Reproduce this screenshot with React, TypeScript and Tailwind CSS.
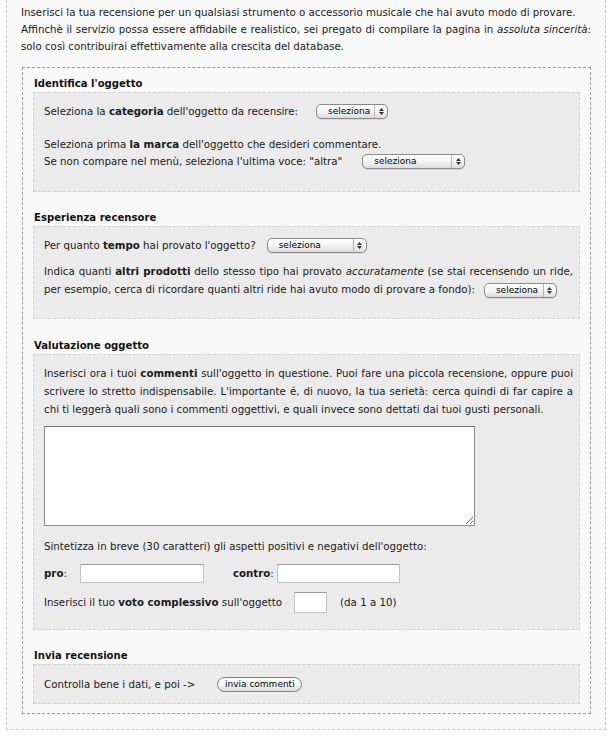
import React from 'react'

const font = { fontFamily: '"DejaVu Sans", Verdana, sans-serif' }

const Select: React.FC<{ width: string }> = ({ width }) => (
  <span
    className={`relative inline-flex h-[15px] ${width} items-center rounded-[5px] border border-[#8a8a8a] bg-gradient-to-b from-white via-[#f4f4f4] to-[#dcdcdc] align-middle shadow-[0_1px_0_rgba(0,0,0,0.08)]`}
  >
    <span className="pl-[11px] text-[9px] leading-none text-black">seleziona</span>
    <span className="absolute right-0 top-0 flex h-full w-[13px] flex-col items-center justify-center gap-[1px] border-l border-[#b5b5b5]">
      <svg width="5" height="3" viewBox="0 0 5 3">
        <path d="M2.5 0L5 3H0z" fill="#333" />
      </svg>
      <svg width="5" height="3" viewBox="0 0 5 3">
        <path d="M0 0h5L2.5 3z" fill="#333" />
      </svg>
    </span>
  </span>
)

const Heading: React.FC<{ children: React.ReactNode; className?: string }> = ({ children, className = '' }) => (
  <h3 className={`pl-[1px] text-[10.1px] font-bold leading-[17px] text-[#111] ${className}`}>{children}</h3>
)

const Box: React.FC<{ children: React.ReactNode; className?: string }> = ({ children, className = '' }) => (
  <div className={`border border-dashed border-[#d2d2d2] bg-[#ebebeb] pl-[10px] pr-[6px] ${className}`}>{children}</div>
)

// one justified line, stretched to the full width
const JLine: React.FC<{ children: React.ReactNode }> = ({ children }) => (
  <span className="block whitespace-nowrap text-justify [text-align-last:justify]">{children}</span>
)

export default function App() {
  return (
    <div className="min-h-screen bg-white pl-[6px] pr-[8px] text-[10.25px] text-[#1a1a1a]" style={font}>
      <div className="border border-t-0 border-dashed border-[#c8c8c8] bg-[#f9f9f9] px-[14px] pb-[15px] pt-[4px]">
        <p className="leading-[17px]">
          <span className="block whitespace-nowrap">
            Inserisci la tua recensione per un qualsiasi strumento o accessorio musicale che hai avuto modo di provare.
          </span>
          <JLine>
            Affinchè il servizio possa essere affidabile e realistico, sei pregato di compilare la pagina in{' '}
            <i>assoluta sincerità</i>:
          </JLine>
          <span className="block">solo così contribuirai effettivamente alla crescita del database.</span>
        </p>

        <div className="ml-[1px] mt-[12px] border border-dashed border-[#9a9a9a] px-[10px] pb-[9px] pt-[7px]">
          <Heading>Identifica l'oggetto</Heading>
          <Box className="pb-[21px] pt-[10px]">
            <p className="flex h-[17px] items-center whitespace-nowrap">
              Seleziona la&nbsp;<b>categoria</b>&nbsp;dell'oggetto da recensire:
              <span className="ml-[18px]">
                <Select width="w-[72px]" />
              </span>
            </p>
            <p className="mt-[16px] leading-[17px]">
              Seleziona prima <b>la marca</b> dell'oggetto che desideri commentare.
            </p>
            <p className="flex h-[17px] items-center whitespace-nowrap">
              Se non compare nel menù, seleziona l'ultima voce: "altra"
              <span className="ml-[20px]">
                <Select width="w-[103px]" />
              </span>
            </p>
          </Box>

          <Heading className="mt-[17px]">Esperienza recensore</Heading>
          <Box className="pb-[20px] pt-[10px]">
            <p className="flex h-[17px] items-center whitespace-nowrap">
              Per quanto&nbsp;<b>tempo</b>&nbsp;hai provato l'oggetto?
              <span className="ml-[11px]">
                <Select width="w-[100px]" />
              </span>
            </p>
            <div className="mt-[8px] leading-[18px]">
              <JLine>
                Indica quanti <b>altri prodotti</b> dello stesso tipo hai provato <i>accuratamente</i> (se stai
                recensendo un ride,
              </JLine>
              <p className="flex h-[18px] items-center whitespace-nowrap">
                per esempio, cerca di ricordare quanti altri ride hai avuto modo di provare a fondo):
                <span className="ml-[9px]">
                  <Select width="w-[73px]" />
                </span>
              </p>
            </div>
          </Box>

          <Heading className="mt-[18px]">Valutazione oggetto</Heading>
          <Box className="pb-[16px] pt-[9px]">
            <div className="leading-[18px]">
              <JLine>
                Inserisci ora i tuoi <b>commenti</b> sull'oggetto in questione. Puoi fare una piccola recensione,
                oppure puoi
              </JLine>
              <JLine>
                scrivere lo stretto indispensabile. L'importante é, di nuovo, la tua serietà: cerca quindi di far
                capire a
              </JLine>
              <span className="block whitespace-nowrap">
                chi ti leggerà quali sono i commenti oggettivi, e quali invece sono dettati dai tuoi gusti personali.
              </span>
            </div>
            <textarea className="mt-[8px] block h-[100px] w-[431px] border border-[#8c8c8c] border-t-[#6f6f6f] bg-white outline-none" />
            <p className="mt-[12px] leading-[17px]">
              Sintetizza in breve (30 caratteri) gli aspetti positivi e negativi dell'oggetto:
            </p>
            <div className="mt-[9px] flex h-[19px] items-center whitespace-nowrap">
              <b>pro</b>:
              <input className="ml-[13px] h-[19px] w-[124px] border border-[#c4c4c4] border-t-[#9a9a9a] bg-white outline-none" />
              <b className="ml-[29px]">contro</b>:
              <input className="ml-[3px] h-[19px] w-[123px] border border-[#c4c4c4] border-t-[#9a9a9a] bg-white outline-none" />
            </div>
            <div className="mt-[9px] flex h-[21px] items-center whitespace-nowrap">
              Inserisci il tuo&nbsp;<b>voto complessivo</b>&nbsp;sull'oggetto
              <input className="ml-[12px] h-[21px] w-[33px] border border-[#c4c4c4] border-t-[#9a9a9a] bg-white outline-none" />
              <span className="ml-[13px]">(da 1 a 10)</span>
            </div>
          </Box>

          <Heading className="mt-[17px]">Invia recensione</Heading>
          <Box className="pb-[10px] pt-[11px]">
            <div className="flex h-[17px] items-center whitespace-nowrap">
              Controlla bene i dati, e poi -&gt;
              <button className="ml-[22px] flex h-[15px] w-[85px] items-center justify-center rounded-full border border-[#7d7d7d] bg-gradient-to-b from-white via-[#f6f6f6] to-[#dedede] text-[9px] leading-none text-black">
                invia commenti
              </button>
            </div>
          </Box>
        </div>
      </div>
    </div>
  )
}
